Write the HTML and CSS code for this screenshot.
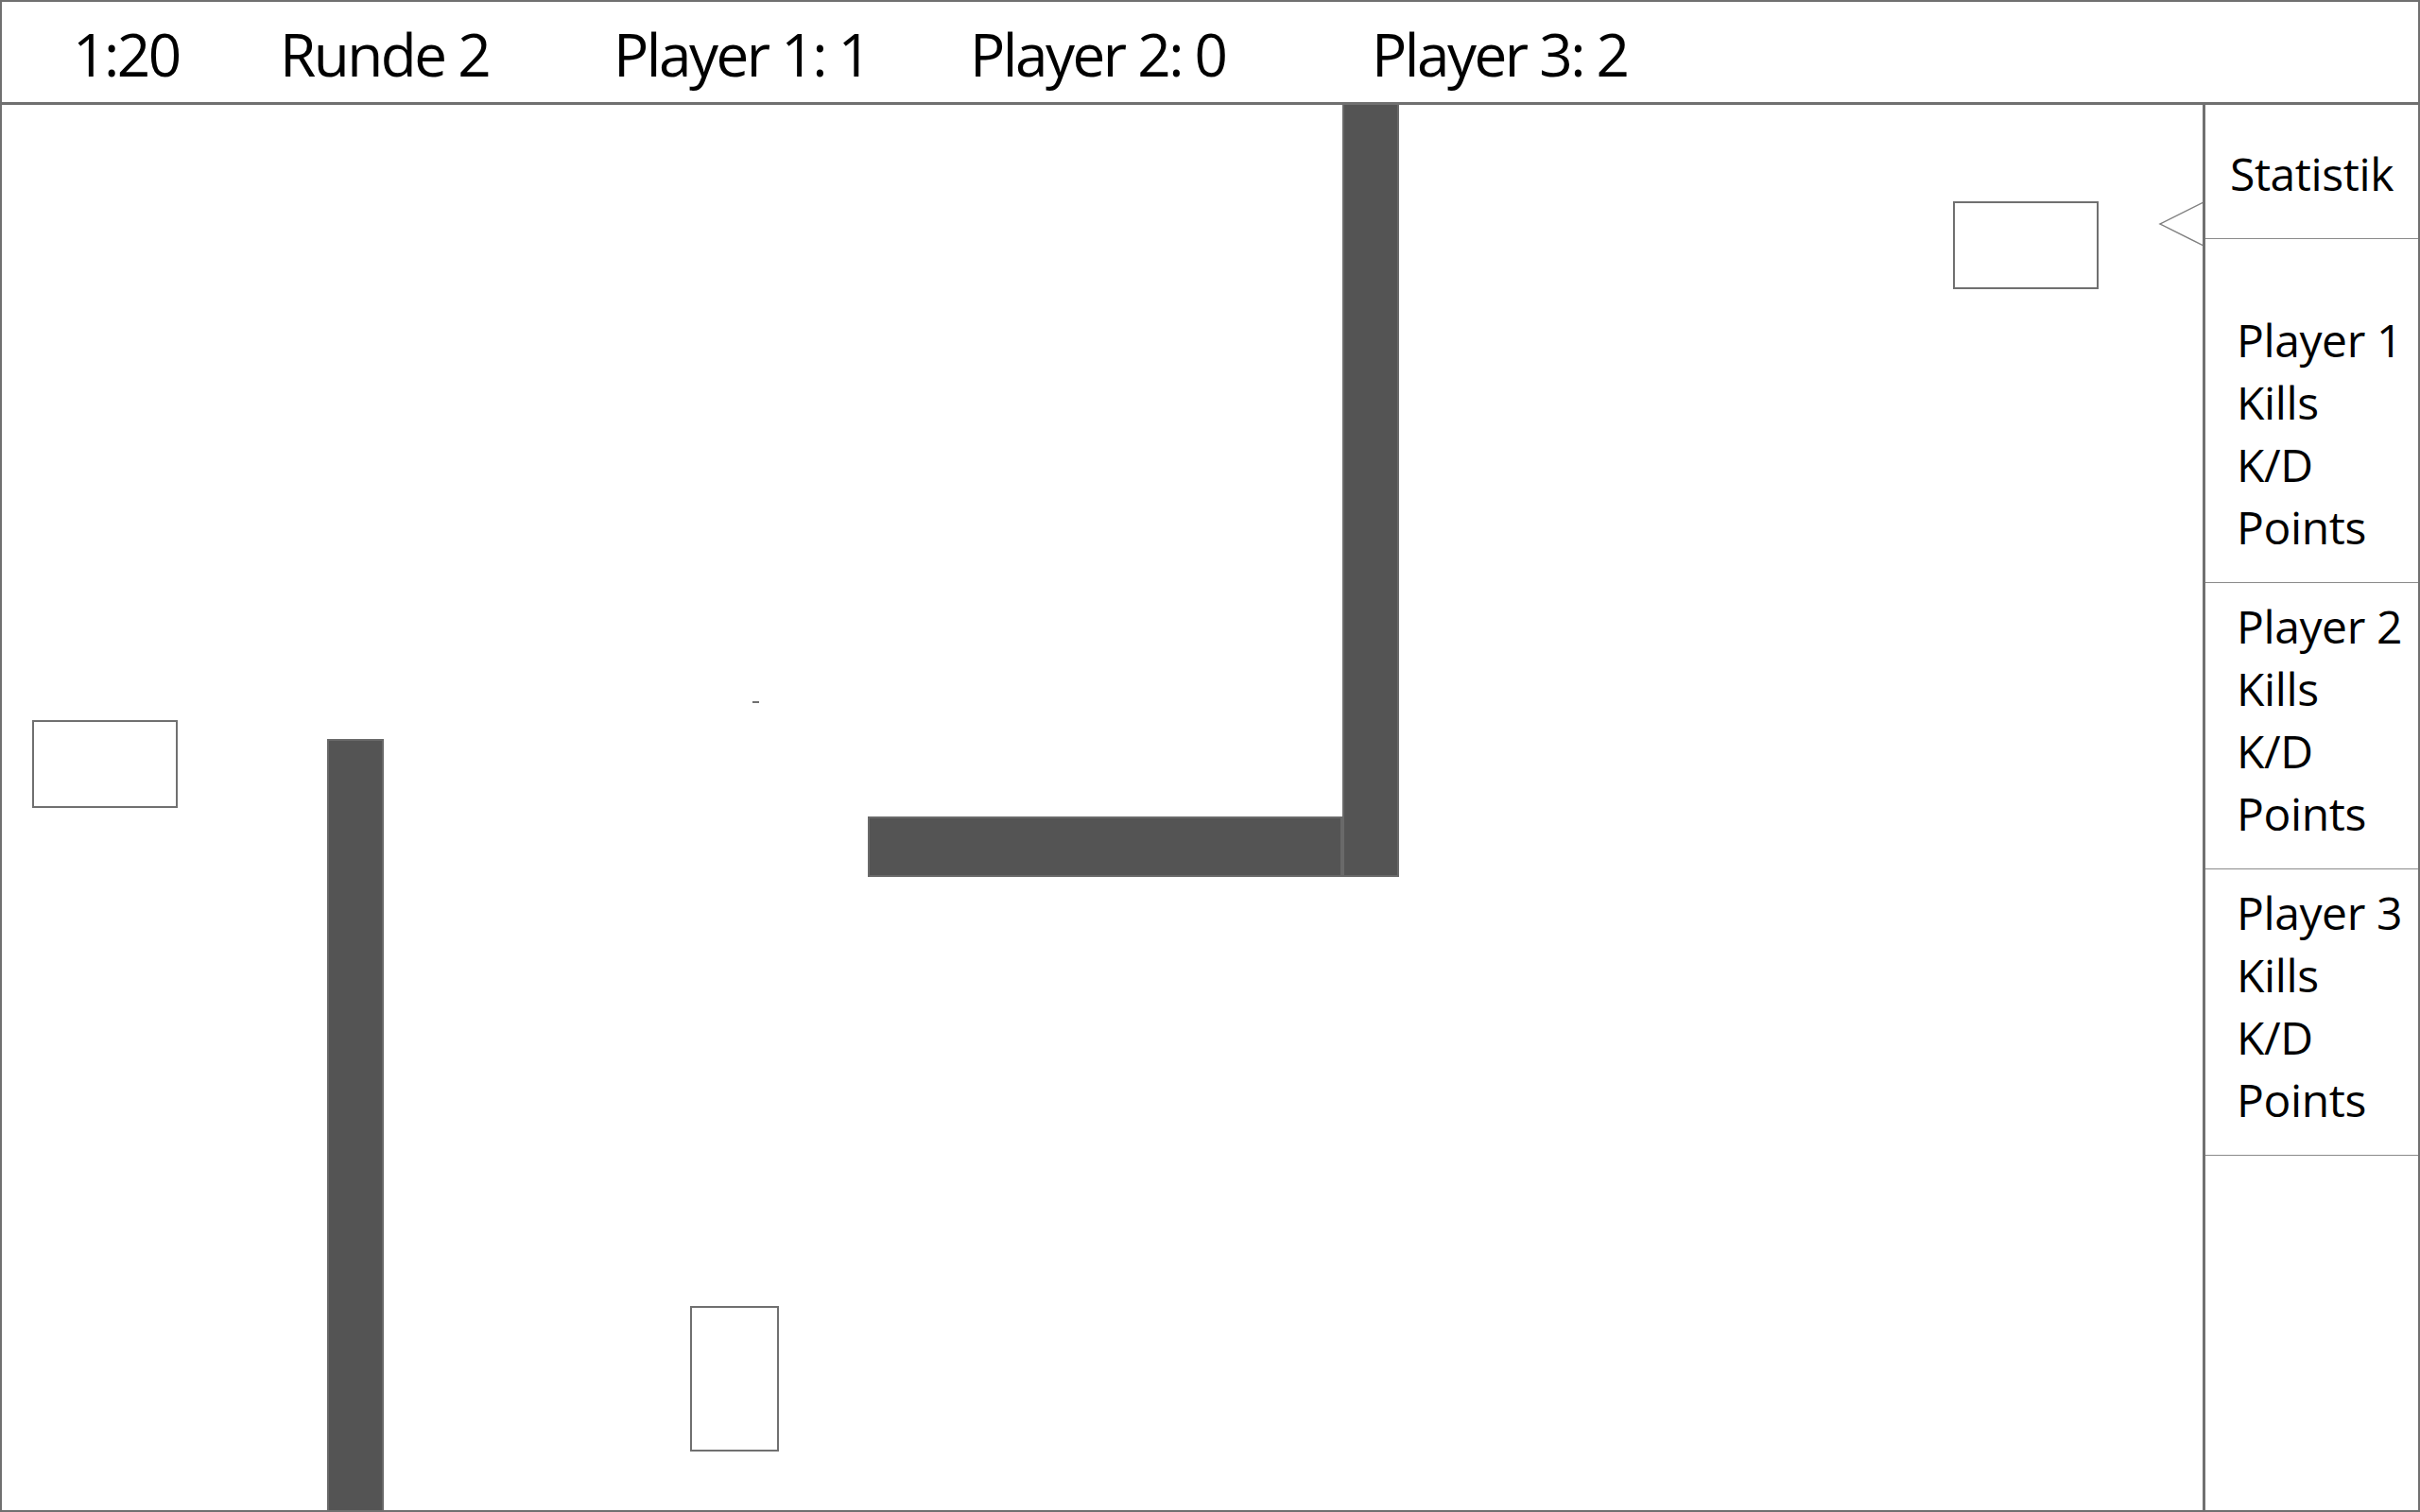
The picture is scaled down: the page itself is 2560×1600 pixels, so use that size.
FILE: index.html
```html
<!DOCTYPE html>
<html lang="de">
<head>
<meta charset="utf-8">
<title>Arena</title>
<link rel="stylesheet" href="styles.css">
</head>
<body>
<div class="app">
  <header class="hud">
    <span class="hud-item">1:20</span>
    <span class="hud-item">Runde 2</span>
    <span class="hud-item">Player 1: 1</span>
    <span class="hud-item">Player 2: 0</span>
    <span class="hud-item">Player 3: 2</span>
  </header>
  <div class="main">
    <div class="arena">
      <div class="wall wall-top"></div>
      <div class="wall wall-mid"></div>
      <div class="wall wall-left"></div>
      <div class="crate crate-tr"></div>
      <div class="crate crate-l"></div>
      <div class="crate crate-b"></div>
      <div class="dash"></div>
      <svg class="toggle" width="46" height="50" viewBox="0 0 46 50">
        <polyline points="47,1 1,24 47,47" fill="none" stroke="#808080" stroke-width="1.5"/>
      </svg>
    </div>
    <aside class="stats">
      <div class="stats-title">Statistik</div>
      <div class="stat-block first">
        <div class="stat-line">Player 1</div>
        <div class="stat-line">Kills</div>
        <div class="stat-line">K/D</div>
        <div class="stat-line">Points</div>
      </div>
      <div class="stat-block">
        <div class="stat-line">Player 2</div>
        <div class="stat-line">Kills</div>
        <div class="stat-line">K/D</div>
        <div class="stat-line">Points</div>
      </div>
      <div class="stat-block">
        <div class="stat-line">Player 3</div>
        <div class="stat-line">Kills</div>
        <div class="stat-line">K/D</div>
        <div class="stat-line">Points</div>
      </div>
    </aside>
  </div>
</div>
</body>
</html>
```
FILE: styles.css
```css
* { box-sizing: border-box; }
html, body { margin: 0; padding: 0; background: #ffffff; }
body {
  font-family: "Open Sans", "Noto Sans", sans-serif;
  color: #000;
}
.app {
  width: 2560px;
  height: 1600px;
  border: 2px solid #707070;
  display: flex;
  flex-direction: column;
  overflow: hidden;
}
.hud {
  height: 109px;
  flex: none;
  border-bottom: 3px solid #707070;
  display: grid;
  grid-template-columns: 219px 353px 377px 425px auto;
  align-items: center;
  padding: 4px 0 0 75px;
  font-size: 62px;
  line-height: 84px;
  letter-spacing: -2.5px;
}
.hud-item { white-space: nowrap; }
.main {
  flex: 1;
  display: flex;
  min-height: 0;
}
.arena {
  flex: 1;
  position: relative;
  overflow: hidden;
}
.wall {
  position: absolute;
  background: #545454;
  border: 2px solid #696969;
}
.wall-top { left: 1418px; top: -2px; width: 60px; height: 819px; }
.wall-mid { left: 916px; top: 753px; width: 502px; height: 64px; }
.wall-left { left: 344px; top: 671px; width: 60px; height: 830px; }
.crate {
  position: absolute;
  border: 2px solid #707070;
  background: #fff;
}
.crate-tr { left: 2064px; top: 102px; width: 154px; height: 93px; }
.crate-l { left: 32px; top: 651px; width: 154px; height: 93px; }
.crate-b { left: 728px; top: 1271px; width: 94px; height: 154px; }
.dash {
  position: absolute;
  left: 794px;
  top: 631px;
  width: 7px;
  height: 2px;
  background: #707070;
}
.toggle {
  position: absolute;
  left: 2282px;
  top: 102px;
  overflow: visible;
}
.stats {
  width: 228px;
  flex: none;
  border-left: 3px solid #707070;
  font-size: 48px;
  line-height: 66px;
  letter-spacing: -0.4px;
}
.stats-title {
  height: 142px;
  border-bottom: 1px solid #8a8a8a;
  display: flex;
  align-items: center;
  justify-content: center;
  padding-top: 4px;
}
.stat-block {
  padding: 13px 0 25px 33px;
  border-bottom: 1px solid #8a8a8a;
}
.stat-block.first { padding-top: 74px; }
.stat-line { white-space: nowrap; }
```
